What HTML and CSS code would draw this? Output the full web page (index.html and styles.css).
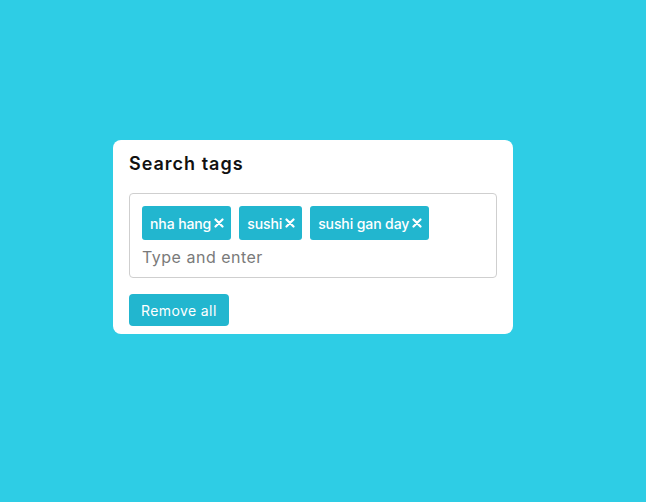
FILE: index.html
```html
<!DOCTYPE html>
<html>
<head>
<meta charset="utf-8">
<link rel="stylesheet" href="styles.css">
</head>
<body>
<main class="page">
  <section class="card">
    <h2 class="title">Search tags</h2>
    <div class="tag-box">
      <ul class="tags">
        <li class="tag"><span>nha hang</span><svg class="x" viewBox="0 0 10 10"><path d="M1.5 1.5L8.5 8.5M8.5 1.5L1.5 8.5"/></svg></li>
        <li class="tag"><span>sushi</span><svg class="x" viewBox="0 0 10 10"><path d="M1.5 1.5L8.5 8.5M8.5 1.5L1.5 8.5"/></svg></li>
        <li class="tag"><span>sushi gan day</span><svg class="x" viewBox="0 0 10 10"><path d="M1.5 1.5L8.5 8.5M8.5 1.5L1.5 8.5"/></svg></li>
      </ul>
      <input class="tag-input" type="text" placeholder="Type and enter">
    </div>
    <button class="btn">Remove all</button>
  </section>
</main>
</body>
</html>
```
FILE: styles.css
```css
* { box-sizing: border-box; }
html, body { margin: 0; }
body {
  background: #2ecde5;
  font-family: "Inter", "Noto Sans", sans-serif;
  min-height: 100vh;
}
.page {
  padding: 140px 0 0 113px;
}
.card {
  width: 400px;
  background: #fff;
  border-radius: 8px;
  padding: 10px 16px 8px;
}
.title {
  margin: 0 0 16px;
  font-size: 18px;
  font-weight: 600;
  letter-spacing: 1px;
  line-height: 27px;
  color: #111;
}
.tag-box {
  border: 1px solid #cfcfcf;
  border-radius: 4px;
  padding: 12px 12px 7px;
}
.tags {
  list-style: none;
  margin: 0;
  padding: 0;
  display: flex;
  flex-wrap: wrap;
  gap: 8px;
}
.tag {
  display: flex;
  align-items: center;
  gap: 3px;
  height: 34px;
  padding: 0 7px 0 8px;
  background: #22b6cf;
  color: #fff;
  border-radius: 3px;
  font-size: 14px;
  font-weight: 500;
  letter-spacing: -0.1px;
}
.x {
  width: 10px;
  height: 10px;
  fill: none;
  stroke: #fff;
  stroke-width: 2.2;
  stroke-linecap: round;
}
.tag-input {
  display: block;
  width: 100%;
  border: 0;
  outline: none;
  padding: 0;
  margin-top: 4px;
  height: 26px;
  font-family: inherit;
  font-size: 16px;
  letter-spacing: 0.5px;
  color: #333;
}
.tag-input::placeholder { color: #7a7a7a; }
.btn {
  margin-top: 16px;
  height: 32px;
  padding: 0 12px;
  border: 0;
  border-radius: 4px;
  background: #22b6cf;
  color: #fff;
  font-family: inherit;
  font-size: 14px;
  letter-spacing: 0.4px;
}
```
